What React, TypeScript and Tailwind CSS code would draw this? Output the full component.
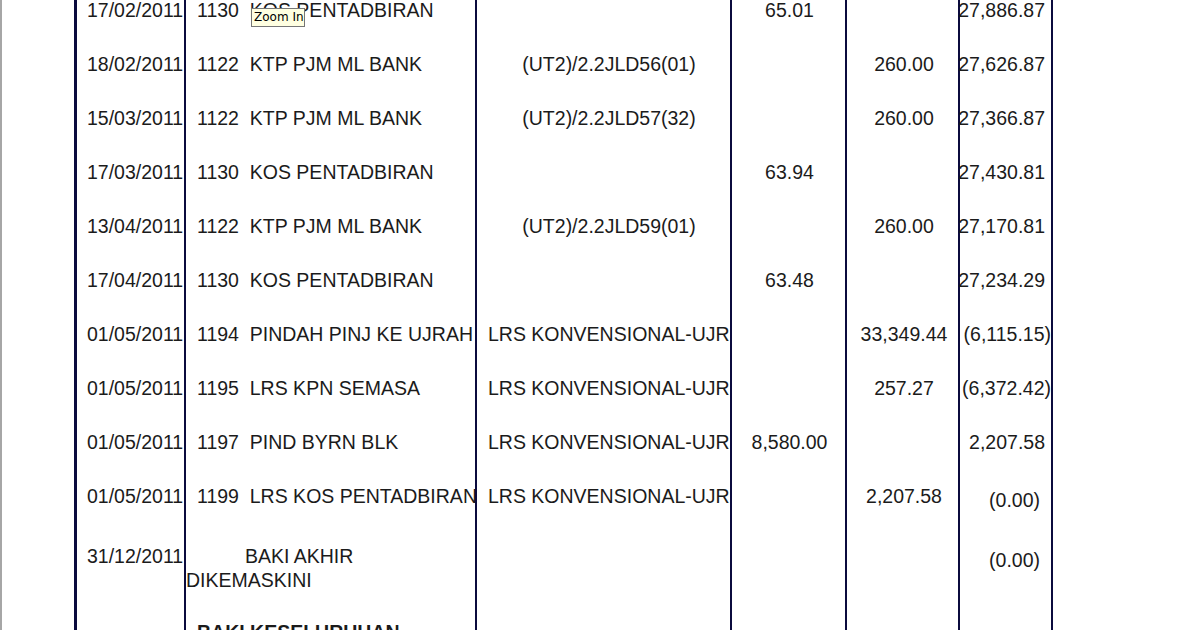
type Row = {
  date: string
  code: string
  desc: string
  ref?: string
  refLeft?: boolean
  debit?: string
  credit?: string
  bal: string
  balPad: string
}

const LRS = 'LRS KONVENSIONAL-UJR'

const ROWS: Row[] = [
  { date: '17/02/2011', code: '1130', desc: 'KOS PENTADBIRAN', debit: '65.01', bal: '27,886.87', balPad: 'pr-[6px]' },
  { date: '18/02/2011', code: '1122', desc: 'KTP PJM ML BANK', ref: '(UT2)/2.2JLD56(01)', credit: '260.00', bal: '27,626.87', balPad: 'pr-[6px]' },
  { date: '15/03/2011', code: '1122', desc: 'KTP PJM ML BANK', ref: '(UT2)/2.2JLD57(32)', credit: '260.00', bal: '27,366.87', balPad: 'pr-[6px]' },
  { date: '17/03/2011', code: '1130', desc: 'KOS PENTADBIRAN', debit: '63.94', bal: '27,430.81', balPad: 'pr-[6px]' },
  { date: '13/04/2011', code: '1122', desc: 'KTP PJM ML BANK', ref: '(UT2)/2.2JLD59(01)', credit: '260.00', bal: '27,170.81', balPad: 'pr-[6px]' },
  { date: '17/04/2011', code: '1130', desc: 'KOS PENTADBIRAN', debit: '63.48', bal: '27,234.29', balPad: 'pr-[6px]' },
  { date: '01/05/2011', code: '1194', desc: 'PINDAH PINJ KE UJRAH', ref: LRS, refLeft: true, credit: '33,349.44', bal: '(6,115.15)', balPad: 'pr-0' },
  { date: '01/05/2011', code: '1195', desc: 'LRS KPN SEMASA', ref: LRS, refLeft: true, credit: '257.27', bal: '(6,372.42)', balPad: 'pr-0' },
  { date: '01/05/2011', code: '1197', desc: 'PIND BYRN BLK', ref: LRS, refLeft: true, debit: '8,580.00', bal: '2,207.58', balPad: 'pr-[6px]' },
  { date: '01/05/2011', code: '1199', desc: 'LRS KOS PENTADBIRAN', ref: LRS, refLeft: true, credit: '2,207.58', bal: '(0.00)', balPad: 'pr-[11px] pt-[8px]' },
]

function LedgerRow({ r }: { r: Row }) {
  return (
    <div className="flex h-[54px]">
      <div className="flex w-[110px] shrink-0 items-center overflow-hidden whitespace-nowrap border-l-[3px] border-[#0b0b3e] pl-[10px]">{r.date}</div>
      <div className="flex w-[291px] shrink-0 items-center overflow-hidden whitespace-pre border-l-2 border-[#0b0b3e] pl-[11px]">{`${r.code}  ${r.desc}`}</div>
      <div
        className={`flex w-[255px] shrink-0 items-center overflow-hidden whitespace-nowrap border-l-2 border-[#0b0b3e] pl-[11px] ${r.refLeft ? 'justify-start' : 'justify-center'}`}
      >
        {r.ref}
      </div>
      <div className="flex w-[115px] shrink-0 items-center justify-center border-l-2 border-[#0b0b3e] pl-[2px]">{r.debit}</div>
      <div className="flex w-[113px] shrink-0 items-center justify-center border-l-2 border-[#0b0b3e] pl-[3px]">{r.credit}</div>
      <div className={`flex w-[95px] shrink-0 items-center justify-end whitespace-nowrap border-x-2 border-[#0b0b3e] ${r.balPad}`}>
        <span className="shrink-0">{r.bal}</span>
      </div>
    </div>
  )
}

export default function App() {
  return (
    <div className="relative h-[630px] w-[1193px] overflow-hidden border-l-2 border-[#a6a6a6] bg-white font-['Liberation_Sans',Arial,sans-serif] text-[19.5px] leading-6 text-[#1b1b1b]">
      {/* page is scrolled, so the top row is partly cut off */}
      <div className="-mt-[17px] ml-[72px] w-[979px]">
        {ROWS.map((r, i) => (
          <LedgerRow key={i} r={r} />
        ))}

        <div className="flex h-[78px]">
          <div className="w-[110px] shrink-0 overflow-hidden whitespace-nowrap border-l-[3px] border-[#0b0b3e] pl-[10px] pt-[21px]">31/12/2011</div>
          <div className="w-[291px] shrink-0 border-l-2 border-[#0b0b3e] pt-[21px]">
            <div className="pl-[59px]">BAKI AKHIR</div>
            <div>DIKEMASKINI</div>
          </div>
          <div className="w-[255px] shrink-0 border-l-2 border-[#0b0b3e]" />
          <div className="w-[115px] shrink-0 border-l-2 border-[#0b0b3e]" />
          <div className="w-[113px] shrink-0 border-l-2 border-[#0b0b3e]" />
          <div className="w-[95px] shrink-0 border-x-2 border-[#0b0b3e] pr-[11px] pt-[25px] text-right">(0.00)</div>
        </div>

        <div className="flex h-[60px]">
          <div className="w-[110px] shrink-0 border-l-[3px] border-[#0b0b3e]" />
          <div className="w-[291px] shrink-0 whitespace-nowrap border-l-2 border-[#0b0b3e] pl-[11px] pt-[19px] font-bold">BAKI KESELURUHAN</div>
          <div className="w-[255px] shrink-0 border-l-2 border-[#0b0b3e]" />
          <div className="w-[115px] shrink-0 border-l-2 border-[#0b0b3e]" />
          <div className="w-[113px] shrink-0 border-l-2 border-[#0b0b3e]" />
          <div className="w-[95px] shrink-0 border-x-2 border-[#0b0b3e]" />
        </div>
      </div>

      <div className="absolute left-[249px] top-[8px] h-[19px] w-[54px] whitespace-nowrap border border-[#767676] bg-[#ffffe1] pl-[2px] font-['DejaVu_Sans',sans-serif] text-[12px] leading-[17px] text-black">
        Zoom In
      </div>
    </div>
  )
}
